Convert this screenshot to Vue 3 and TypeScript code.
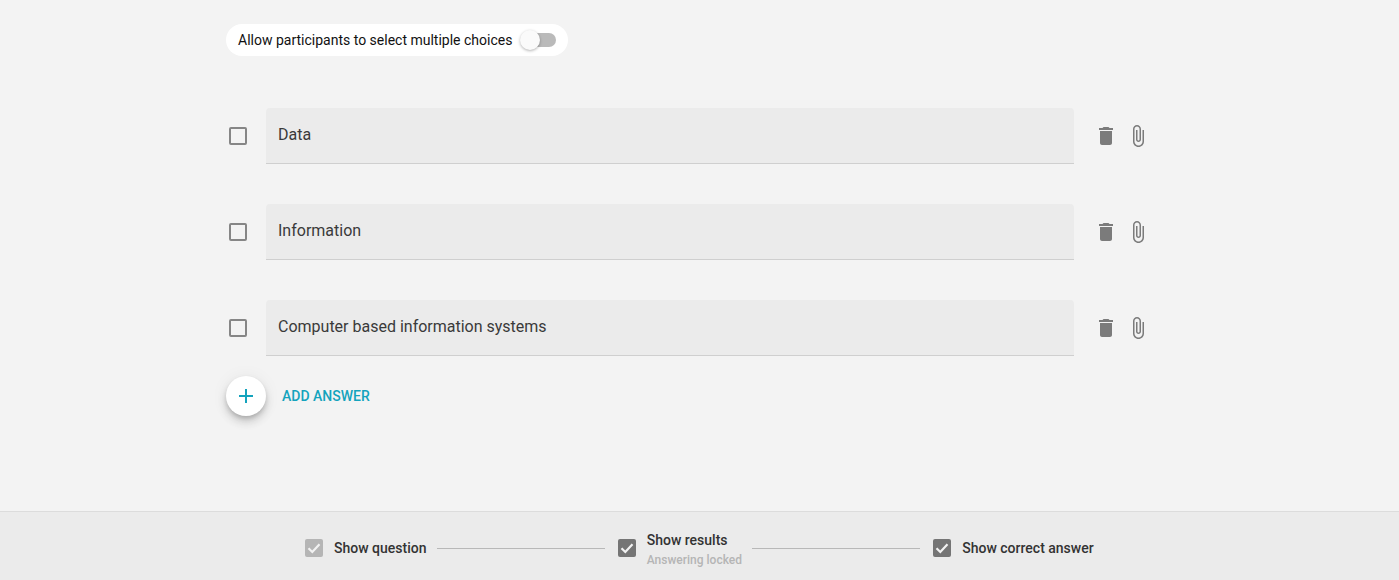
<script setup lang="ts">
const answers: string[] = ['Data', 'Information', 'Computer based information systems']
const steps = [
  { label: 'Show question', sub: '', muted: true },
  { label: 'Show results', sub: 'Answering locked', muted: false },
  { label: 'Show correct answer', sub: '', muted: false },
]
</script>

<template>
  <div class="page">
    <main class="main">
      <div class="toggle-pill">
        <span class="toggle-label">Allow participants to select multiple choices</span>
        <span class="switch"><span class="track"></span><span class="thumb"></span></span>
      </div>
      <ul class="answers">
        <li v-for="a in answers" :key="a" class="answer">
          <span class="box"></span>
          <div class="field">{{ a }}</div>
          <div class="actions">
            <svg class="trash" width="24" height="24" viewBox="0 0 24 24"><path fill="#7b7b7b" d="M6 19c0 1.1.9 2 2 2h8c1.1 0 2-.9 2-2V7H6v12zM19 4h-3.500l-1-1h-5l-1 1H5v2h14V4z"/></svg>
            <svg class="clip" width="24" height="24" viewBox="0 0 24 24"><path fill="#7b7b7b" d="M16.500 6v11.500c0 2.210-1.790 4-4 4s-4-1.790-4-4V5c0-1.380 1.120-2.500 2.500-2.500s2.500 1.120 2.500 2.500v10.500c0 .55-.45 1-1 1s-1-.45-1-1V6H10v9.500c0 1.380 1.120 2.500 2.500 2.500s2.500-1.120 2.500-2.500V5c0-2.210-1.790-4-4-4S7 2.790 7 5v12.500c0 3.040 2.460 5.500 5.500 5.500s5.500-2.460 5.500-5.500V6h-1.500z"/></svg>
          </div>
        </li>
      </ul>
      <div class="add">
        <button class="fab" type="button" aria-label="Add answer">
          <svg width="24" height="24" viewBox="0 0 24 24"><path fill="#14a3bd" d="M19 13h-6v6h-2v-6H5v-2h6V5h2v6h6v2z"/></svg>
        </button>
        <span class="add-label">ADD ANSWER</span>
      </div>
    </main>
    <footer class="footer">
      <template v-for="(s, i) in steps" :key="s.label">
        <span v-if="i > 0" class="line"></span>
        <div class="step">
          <span class="check" :class="{ muted: s.muted }">
            <svg width="14" height="14" viewBox="0 0 14 14"><path fill="none" stroke="#f2f2f2" stroke-width="2.200" d="M1.500 7.200l3.800 3.800 7.200-7.800"/></svg>
          </span>
          <div class="step-text" :class="{ stacked: s.sub }">
            <span class="step-label">{{ s.label }}</span>
            <span v-if="s.sub" class="step-sub">{{ s.sub }}</span>
          </div>
        </div>
      </template>
    </footer>
  </div>
</template>

<style>
html, body { margin: 0; background: #f3f3f3; }
</style>

<style scoped>
.page {
  width: 1399px;
  height: 580px;
  display: flex;
  flex-direction: column;
  background: #f3f3f3;
  font-family: Roboto, "Liberation Sans", sans-serif;
  overflow: hidden;
}
.main {
  flex: 1;
  padding: 24px 0 0 226px;
  box-sizing: border-box;
}
.toggle-pill {
  display: inline-flex;
  align-items: center;
  height: 32px;
  padding: 0 12px;
  border-radius: 16px;
  background: #fff;
  box-sizing: border-box;
  vertical-align: top;
}
.toggle-label { font-size: 14px; color: #111; white-space: nowrap; }
.switch { position: relative; display: block; width: 36px; height: 20px; margin-left: 8px; }
.track { position: absolute; left: 3px; right: 0; top: 3px; height: 14px; border-radius: 7px; background: #bababa; }
.thumb {
  position: absolute; left: 0; top: 0; width: 20px; height: 20px; border-radius: 50%;
  background: #fafafa;
  box-shadow: 0 1px 3px rgba(0,0,0,.3);
}
.answers { list-style: none; margin: 52px 0 0; padding: 0; display: flex; flex-direction: column; gap: 40px; }
.answer { display: flex; align-items: center; height: 56px; }
.box {
  width: 18px; height: 18px; box-sizing: border-box; margin-left: 3px;
  border: 2px solid #868686; border-radius: 2px;
}
.field {
  width: 808px; height: 56px; margin-left: 19px; padding: 0 12px 3px; box-sizing: border-box;
  display: flex; align-items: center;
  background: #ebebeb;
  border-bottom: 1px solid #cfcfcf;
  border-radius: 4px 4px 0 0;
  font-size: 16px; color: #3a3a3a;
}
.actions { display: flex; align-items: center; gap: 8px; margin-left: 20px; }
.add { display: flex; align-items: center; margin-top: 20px; }
.fab {
  width: 40px; height: 40px; padding: 0; border: 0; border-radius: 50%; background: #fff;
  display: flex; align-items: center; justify-content: center;
  box-shadow: 0 3px 5px -1px rgba(0,0,0,.2), 0 6px 10px 0 rgba(0,0,0,.14), 0 1px 18px 0 rgba(0,0,0,.06);
}
.add-label { margin-left: 16px; font-size: 14px; font-weight: 500; color: #14a3bd; }
.footer {
  height: 69px;
  box-sizing: border-box;
  border-top: 1px solid #dcdcdc;
  background: #ebebeb;
  display: flex;
  align-items: center;
  padding: 4px 0 0 305px;
}
.step { display: flex; align-items: center; }
.check {
  width: 18px; height: 18px; border-radius: 2px; background: #757575;
  display: flex; align-items: center; justify-content: center;
}
.check.muted { background: #b5b5b5; }
.step-text { display: flex; flex-direction: column; margin-left: 11px; }
.step-text.stacked { margin-top: 4px; }
.step-label { font-size: 14px; font-weight: 500; color: #333; line-height: 20px; white-space: nowrap; }
.step-sub { font-size: 12px; font-weight: 500; color: #b5b5b5; line-height: 20px; white-space: nowrap; }
.line { width: 168px; height: 1px; background: #b8b8b8; margin: 0 13px 0 10.250px; }
</style>
